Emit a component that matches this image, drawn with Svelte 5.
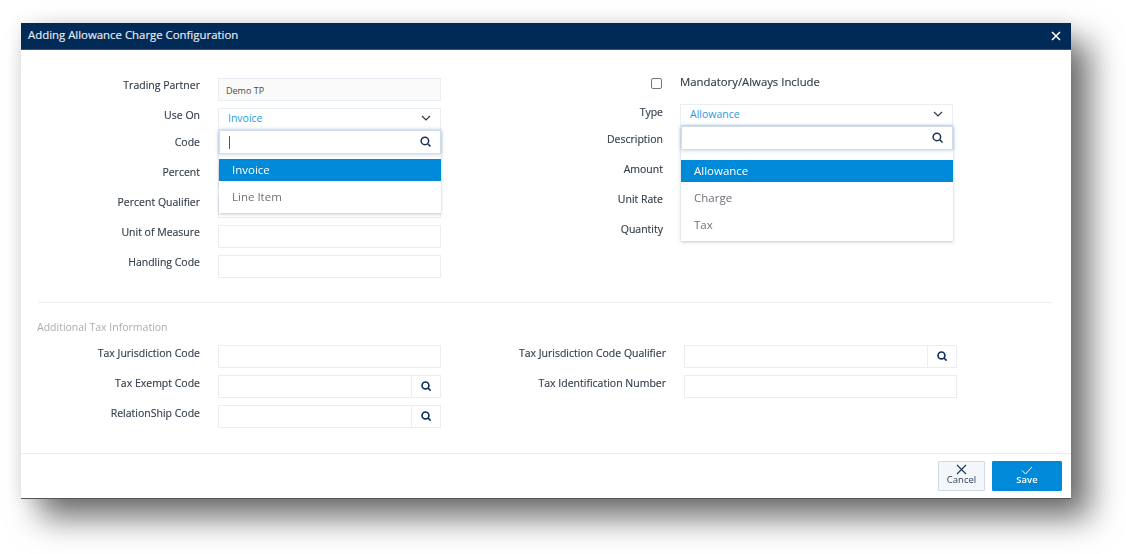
<script>
  const searchPath = "M6.5 1.5a5 5 0 1 0 0 10a5 5 0 0 0 0-10Z M10.2 10.2 L14 14";
  const leftTop = ['Percent', 'Percent Qualifier', 'Unit of Measure', 'Handling Code'];
  const rightRows = ['Amount', 'Unit Rate', 'Quantity'];
</script>

<div class="page">
<div class="dialog">
  <header class="head">
    <span class="title">Adding Allowance Charge Configuration</span>
    <svg class="close" width="10" height="10" viewBox="0 0 10 10" aria-hidden="true"><path d="M1 1 9 9M9 1 1 9" stroke="#fff" stroke-width="1.6" fill="none"/></svg>
  </header>

  <div class="upper">
    <div class="col col-left">
      <div class="row">
        <span class="lab">Trading Partner</span>
        <div class="inp ro">Demo TP</div>
      </div>
      <div class="row row-use">
        <span class="lab">Use On</span>
        <div class="inp sel">
          <span>Invoice</span>
          <svg width="10" height="6" viewBox="0 0 10 6" aria-hidden="true"><path d="M1 1l4 4 4-4" stroke="#2f3a46" stroke-width="1.2" fill="none"/></svg>
          <div class="panel panel-l">
            <div class="search">
              <i class="caret"></i>
              <svg width="12" height="12" viewBox="0 0 16 16" aria-hidden="true"><path d={searchPath} stroke="#1d3350" stroke-width="2" fill="none"/></svg>
            </div>
            <ul class="opts opts-l">
              <li class="on">Invoice</li>
              <li>Line Item</li>
            </ul>
          </div>
        </div>
      </div>
      <div class="row">
        <span class="lab">Code</span>
      </div>
      {#each leftTop as r}
        <div class="row">
          <span class="lab">{r}</span>
          <div class="inp"></div>
        </div>
      {/each}
    </div>

    <div class="col col-right">
      <div class="check-row">
        <span class="box"></span>
        <span class="check-text">Mandatory/Always Include</span>
      </div>
      <div class="row row-type">
        <span class="lab">Type</span>
        <div class="inp sel">
          <span>Allowance</span>
          <svg width="10" height="6" viewBox="0 0 10 6" aria-hidden="true"><path d="M1 1l4 4 4-4" stroke="#2f3a46" stroke-width="1.2" fill="none"/></svg>
          <div class="panel panel-r">
            <div class="search">
              <svg width="12" height="12" viewBox="0 0 16 16" aria-hidden="true"><path d={searchPath} stroke="#1d3350" stroke-width="2" fill="none"/></svg>
            </div>
            <ul class="opts opts-r">
              <li class="on">Allowance</li>
              <li>Charge</li>
              <li>Tax</li>
            </ul>
          </div>
        </div>
      </div>
      <div class="row"><span class="lab">Description</span></div>
      {#each rightRows as r}
        <div class="row"><span class="lab">{r}</span></div>
      {/each}
    </div>
  </div>

  <hr class="rule" />

  <div class="tax-title">Additional Tax Information</div>

  <div class="tax">
    <div class="col col-left">
      <div class="row">
        <span class="lab">Tax Jurisdiction Code</span>
        <div class="inp"></div>
      </div>
      <div class="row">
        <span class="lab">Tax Exempt Code</span>
        <div class="inp look">
          <button class="look-btn" aria-label="Search"><svg width="11" height="11" viewBox="0 0 16 16"><path d={searchPath} stroke="#10305c" stroke-width="2.4" fill="none"/></svg></button>
        </div>
      </div>
      <div class="row">
        <span class="lab">RelationShip Code</span>
        <div class="inp look">
          <button class="look-btn" aria-label="Search"><svg width="11" height="11" viewBox="0 0 16 16"><path d={searchPath} stroke="#10305c" stroke-width="2.4" fill="none"/></svg></button>
        </div>
      </div>
    </div>
    <div class="col col-tax-right">
      <div class="row">
        <span class="lab">Tax Jurisdiction Code Qualifier</span>
        <div class="inp look">
          <button class="look-btn" aria-label="Search"><svg width="11" height="11" viewBox="0 0 16 16"><path d={searchPath} stroke="#10305c" stroke-width="2.4" fill="none"/></svg></button>
        </div>
      </div>
      <div class="row">
        <span class="lab">Tax Identification Number</span>
        <div class="inp"></div>
      </div>
    </div>
  </div>

  <footer class="foot">
    <button class="btn cancel">
      <svg width="11" height="11" viewBox="0 0 11 11" aria-hidden="true"><path d="M1 1 10 10M10 1 1 10" stroke="#1c3557" stroke-width="1.1" fill="none"/></svg>
      <span>Cancel</span>
    </button>
    <button class="btn save">
      <svg width="12" height="9" viewBox="0 0 12 9" aria-hidden="true"><path d="M1 4.5 4.5 8 11 1" stroke="#fff" stroke-width="1" fill="none"/></svg>
      <span>Save</span>
    </button>
  </footer>
</div>
</div>

<style>
  :global(body) {
    margin: 0;
    background: #fff;
  }
  * { box-sizing: border-box; }
  .page {
    height: 554px;
    padding: 23px 0 0 21px;
    overflow: hidden;
  }
  .dialog {
    width: 1050px;
    height: 476px;
    background: #fff;
    border-bottom: 1px solid #555;
    box-shadow: 19px 19px 30px rgba(0, 0, 0, 0.56), 0 0 18px rgba(0, 0, 0, 0.1);
    font-family: "Open Sans", "Noto Sans", sans-serif;
    font-size: 10.5px;
    color: #333d4a;
    display: flex;
    flex-direction: column;
    filter: blur(0.3px);
  }
  .head {
    height: 27px;
    flex: none;
    background: #012a57;
    border-bottom: 1px solid #33527a;
    display: flex;
    align-items: center;
    justify-content: space-between;
    padding: 0 10px 3px 7px;
    color: #e8edf3;
  }
  .title { font-size: 11.4px; -webkit-text-stroke: 0.15px #e8edf3; }
  .close { margin-top: 3px; }

  .upper {
    display: flex;
    padding-top: 28px;
    height: 252px;
    flex: none;
  }
  .col-left { width: 420px; }
  .col-right { width: 630px; }
  .row {
    height: 30px;
    display: flex;
    align-items: flex-start;
  }
  .lab {
    width: 179px;
    text-align: right;
    flex: none;
    margin-right: 18px;
    line-height: 14px;
    white-space: nowrap;
    -webkit-text-stroke: 0.15px #333d4a;
  }
  .inp {
    width: 223px;
    height: 23px;
    border: 1px solid #e9eef4;
    background: #fff;
    position: relative;
  }
  .ro {
    background: #fafafa;
    font-size: 9px;
    color: #4c4c52;
    padding: 5px 0 0 7px;
    line-height: 14px;
  }
  .sel {
    display: flex;
    align-items: center;
    justify-content: space-between;
    padding: 0 9px 3px 9px;
    color: #2a9ae0;
  }
  .row-use { height: 27px; }
  .panel {
    position: absolute;
    left: 0;
    background: #fff;
    z-index: 2;
    box-shadow: 0 1px 3px rgba(70, 90, 120, 0.35);
    color: #6c727a;
  }
  .panel-l { top: 21px; width: 222px; }
  .panel-r { top: 21px; width: 272px; }
  .search {
    height: 24px;
    border: 1px solid #d3dde9;
    box-shadow: 0 0 4px rgba(80, 140, 200, 0.45);
    background: #fff;
    display: flex;
    align-items: center;
    justify-content: flex-end;
    padding-right: 8px;
    position: relative;
  }
  .caret {
    position: absolute;
    left: 9px;
    top: 5px;
    width: 1px;
    height: 13px;
    background: #555;
  }
  .opts {
    list-style: none;
    margin: 0;
    padding: 0 0 5px;
    font-size: 11.5px;
  }
  .opts-l { padding-top: 5px; }
  .opts-r { padding-top: 10px; }
  .opts li {
    height: 27px;
    padding: 7px 0 0 13px;
    line-height: 17px;
  }
  .opts .on {
    height: 22px;
    background: #0089d8;
    color: #fff;
    padding-top: 2px;
  }
  .check-row {
    height: 26px;
    display: flex;
    align-items: flex-start;
  }
  .box {
    width: 11px;
    height: 11px;
    border: 1px solid #777;
    border-radius: 2px;
    margin: 0 18px 0 210px;
  }
  .check-text { font-size: 11.35px; line-height: 8px; -webkit-text-stroke: 0.15px #333d4a; }
  .col-right .lab { width: 222px; margin-right: 17px; }
  .col-right .inp { width: 273px; }
  .row-type { height: 28px; }
  .row-type .lab { padding-top: 1px; }
  .row-type .inp { height: 22px; padding-bottom: 2px; }

  .rule {
    margin: 0 18px 0 17px;
    border: 0;
    border-top: 1px solid #edf0f3;
    flex: none;
  }
  .tax-title {
    margin: 17px 0 0 16px;
    color: #a9adb2;
    font-size: 10.5px;
    line-height: 14px;
    height: 14px;
  }
  .tax {
    display: flex;
    margin-top: 11px;
    height: 108px;
    flex: none;
  }
  .tax .lab { padding-top: 1px; }
  .col-tax-right { width: 630px; }
  .col-tax-right .lab { width: 225px; }
  .col-tax-right .inp { width: 273px; }
  .look { display: flex; justify-content: flex-end; }
  .look-btn {
    width: 29px;
    height: 100%;
    background: #fff;
    border: 0;
    border-left: 1px solid #e9eef4;
    padding: 0;
    display: flex;
    align-items: center;
    justify-content: center;
  }
  .foot {
    margin-top: auto;
    height: 45px;
    border-top: 1px solid #e9edf0;
    display: flex;
    justify-content: flex-end;
    gap: 7px;
    padding: 7px 9px 0 0;
  }
  .btn {
    height: 30px;
    font-family: inherit;
    font-size: 9.5px;
    display: flex;
    flex-direction: column;
    align-items: center;
    padding: 2px 0 0;
    line-height: 10px;
    border-radius: 1px;
  }
  .cancel {
    width: 47px;
    background: #f3f7fc;
    border: 1px solid #cfdae6;
    color: #2c3e55;
  }
  .save {
    width: 70px;
    background: #0089d8;
    border: 1px solid #0089d8;
    color: #fff;
    font-weight: 600;
  }
  .save svg { margin: 2px 0 0; }
</style>
